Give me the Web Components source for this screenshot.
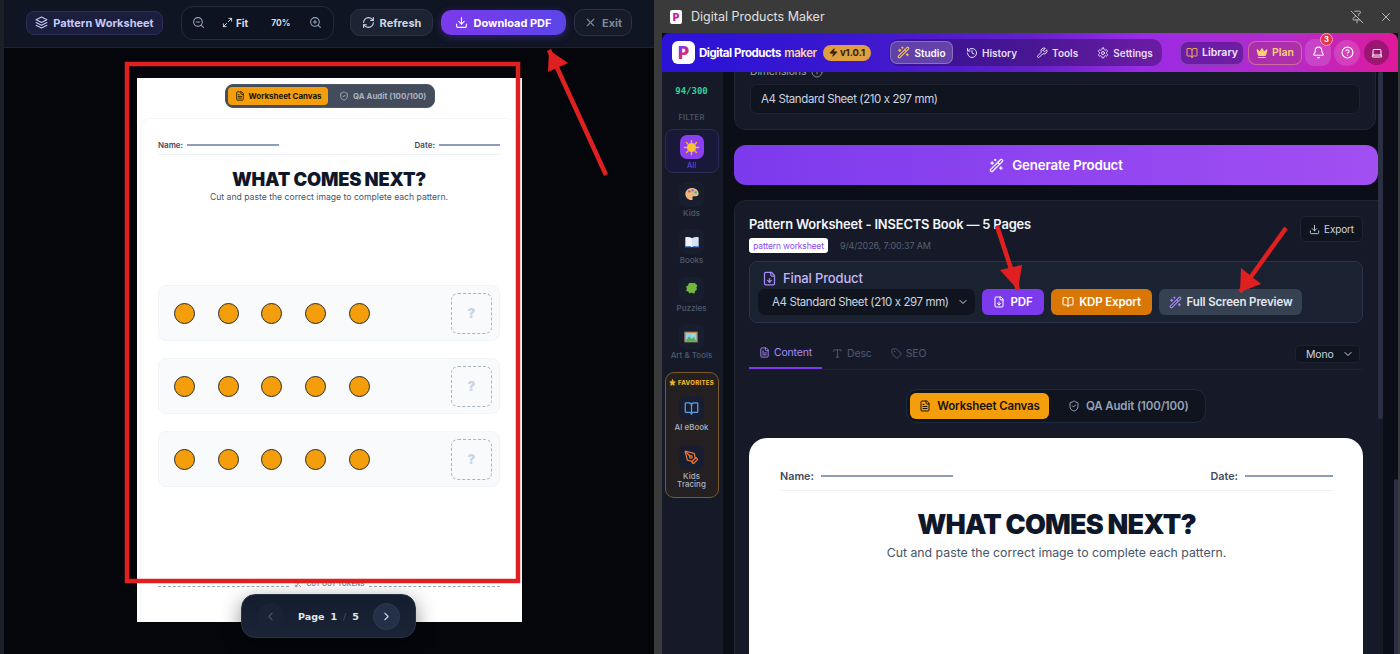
<!DOCTYPE html>
<html lang="en">
<head>
<meta charset="utf-8">
<title>Digital Products Maker</title>
<style>
  html, body { margin: 0; height: 654px; overflow: hidden; background: #3a3a3a; }
  body { display: flex; width: 1400px; font-family: Inter, "Liberation Sans", sans-serif; }
</style>
</head>
<body>
<preview-pane></preview-pane>
<app-window></app-window>
<annotation-layer></annotation-layer>

<script>
const ICONS = {
  layers: '<path d="M12 2 2 7l10 5 10-5-10-5z"/><path d="m2 17 10 5 10-5"/><path d="m2 12 10 5 10-5"/>',
  zoomOut: '<circle cx="11" cy="11" r="8"/><path d="m21 21-4.35-4.35"/><path d="M8 11h6"/>',
  zoomIn: '<circle cx="11" cy="11" r="8"/><path d="m21 21-4.35-4.35"/><path d="M8 11h6M11 8v6"/>',
  expand: '<path d="M15 3h6v6"/><path d="M9 21H3v-6"/><path d="M21 3l-7 7"/><path d="m3 21 7-7"/>',
  refresh: '<path d="M3 12a9 9 0 0 1 9-9 9.75 9.75 0 0 1 6.74 2.74L21 8"/><path d="M21 3v5h-5"/><path d="M21 12a9 9 0 0 1-9 9 9.75 9.75 0 0 1-6.74-2.74L3 16"/><path d="M8 16H3v5"/>',
  download: '<path d="M21 15v4a2 2 0 0 1-2 2H5a2 2 0 0 1-2-2v-4"/><path d="m7 10 5 5 5-5"/><path d="M12 15V3"/>',
  x: '<path d="M18 6 6 18"/><path d="m6 6 12 12"/>',
  file: '<path d="M15 2H6a2 2 0 0 0-2 2v16a2 2 0 0 0 2 2h12a2 2 0 0 0 2-2V7z"/><path d="M14 2v4a2 2 0 0 0 2 2h4"/><path d="M10 9H8"/><path d="M16 13H8"/><path d="M16 17H8"/>',
  fileDown: '<path d="M15 2H6a2 2 0 0 0-2 2v16a2 2 0 0 0 2 2h12a2 2 0 0 0 2-2V7z"/><path d="M14 2v4a2 2 0 0 0 2 2h4"/><path d="M12 18v-6"/><path d="m9 15 3 3 3-3"/>',
  shield: '<path d="M20 13c0 5-3.5 7.5-7.66 8.95a1 1 0 0 1-.67-.01C7.5 20.5 4 18 4 13V6a1 1 0 0 1 1-1c2 0 4.5-1.2 6.24-2.72a1.17 1.17 0 0 1 1.52 0C14.51 3.81 17 5 19 5a1 1 0 0 1 1 1z"/><path d="m9 12 2 2 4-4"/>',
  book: '<path d="M12 7v14"/><path d="M3 18a1 1 0 0 1-1-1V4a1 1 0 0 1 1-1h5a4 4 0 0 1 4 4 4 4 0 0 1 4-4h5a1 1 0 0 1 1 1v13a1 1 0 0 1-1 1h-6a3 3 0 0 0-3 3 3 3 0 0 0-3-3z"/>',
  wand: '<path d="m21.64 3.64-1.28-1.28a1.21 1.21 0 0 0-1.72 0L2.36 18.64a1.21 1.21 0 0 0 0 1.72l1.28 1.28a1.2 1.2 0 0 0 1.72 0L21.64 5.36a1.2 1.2 0 0 0 0-1.72"/><path d="m14 7 3 3"/><path d="M5 6v4"/><path d="M19 14v4"/><path d="M10 2v2"/><path d="M7 8H3"/><path d="M21 16h-4"/><path d="M11 3H9"/>',
  history: '<path d="M3 12a9 9 0 1 0 9-9 9.75 9.75 0 0 0-6.74 2.74L3 8"/><path d="M3 3v5h5"/><path d="M12 7v5l4 2"/>',
  wrench: '<path d="M14.7 6.3a1 1 0 0 0 0 1.4l1.6 1.6a1 1 0 0 0 1.4 0l3.77-3.77a6 6 0 0 1-7.94 7.94l-6.91 6.91a2.12 2.12 0 0 1-3-3l6.91-6.91a6 6 0 0 1 7.94-7.94l-3.76 3.76z"/>',
  settings: '<path d="M12.22 2h-.44a2 2 0 0 0-2 2v.18a2 2 0 0 1-1 1.73l-.43.25a2 2 0 0 1-2 0l-.15-.08a2 2 0 0 0-2.73.73l-.22.38a2 2 0 0 0 .73 2.73l.15.1a2 2 0 0 1 1 1.72v.51a2 2 0 0 1-1 1.74l-.15.09a2 2 0 0 0-.73 2.73l.22.38a2 2 0 0 0 2.73.73l.15-.08a2 2 0 0 1 2 0l.43.25a2 2 0 0 1 1 1.73V20a2 2 0 0 0 2 2h.44a2 2 0 0 0 2-2v-.18a2 2 0 0 1 1-1.73l.43-.25a2 2 0 0 1 2 0l.15.08a2 2 0 0 0 2.73-.73l.22-.39a2 2 0 0 0-.73-2.73l-.15-.08a2 2 0 0 1-1-1.74v-.5a2 2 0 0 1 1-1.74l.15-.09a2 2 0 0 0 .73-2.73l-.22-.38a2 2 0 0 0-2.73-.73l-.15.08a2 2 0 0 1-2 0l-.43-.25a2 2 0 0 1-1-1.73V4a2 2 0 0 0-2-2z"/><circle cx="12" cy="12" r="3"/>',
  crown: '<path d="M11.562 3.266a.5.5 0 0 1 .876 0L15.39 8.87a1 1 0 0 0 1.516.294L21.183 5.5a.5.5 0 0 1 .798.519l-2.834 10.246a1 1 0 0 1-.956.734H5.81a1 1 0 0 1-.957-.734L2.02 6.02a.5.5 0 0 1 .798-.519l4.276 3.664a1 1 0 0 0 1.516-.294z"/><path d="M5 21h14"/>',
  bell: '<path d="M10.268 21a2 2 0 0 0 3.464 0"/><path d="M3.262 15.326A1 1 0 0 0 4 17h16a1 1 0 0 0 .74-1.673C19.41 13.956 18 12.499 18 8A6 6 0 0 0 6 8c0 4.499-1.411 5.956-2.738 7.326"/>',
  help: '<circle cx="12" cy="12" r="10"/><path d="M9.09 9a3 3 0 0 1 5.83 1c0 2-3 3-3 3"/><path d="M12 17h.01"/>',
  info: '<circle cx="12" cy="12" r="10"/><path d="M12 16v-4"/><path d="M12 8h.01"/>',
  laptop: '<path d="M20 16V7a2 2 0 0 0-2-2H6a2 2 0 0 0-2 2v9m16 0H4m16 0 1.28 2.55a1 1 0 0 1-.9 1.45H3.62a1 1 0 0 1-.9-1.45L4 16"/>',
  type: '<path d="M4 7V4h16v3"/><path d="M9 20h6"/><path d="M12 4v16"/>',
  tag: '<path d="M12.586 2.586A2 2 0 0 0 11.172 2H4a2 2 0 0 0-2 2v7.172a2 2 0 0 0 .586 1.414l8.704 8.704a2.426 2.426 0 0 0 3.42 0l6.58-6.58a2.426 2.426 0 0 0 0-3.42z"/><circle cx="7.5" cy="7.5" r=".5"/>',
  left: '<path d="m15 18-6-6 6-6"/>',
  right: '<path d="m9 18 6-6-6-6"/>',
  down: '<path d="m6 9 6 6 6-6"/>',
  pinOff: '<path d="M12 17v5"/><path d="M15 9.34V7a1 1 0 0 1 1-1 2 2 0 0 0 0-4H7.89"/><path d="m2 2 20 20"/><path d="M9 9v1.76a2 2 0 0 1-1.11 1.79l-1.78.9A2 2 0 0 0 5 15.24V16a1 1 0 0 0 1 1h11"/>',
  pen: '<path d="M15.707 21.293a1 1 0 0 1-1.414 0l-1.586-1.586a1 1 0 0 1 0-1.414l5.586-5.586a1 1 0 0 1 1.414 0l1.586 1.586a1 1 0 0 1 0 1.414z"/><path d="m18 13-1.375-6.874a1 1 0 0 0-.746-.776L3.235 2.028a1 1 0 0 0-1.207 1.207L5.35 15.879a1 1 0 0 0 .776.746L13 18"/><path d="m2.3 2.3 7.286 7.286"/><circle cx="11" cy="11" r="2"/>',
  scissors: '<circle cx="6" cy="6" r="3"/><circle cx="6" cy="18" r="3"/><path d="M8.12 8.12 12 12"/><path d="M20 4 8.12 15.88"/><path d="M14.8 14.8 20 20"/>',
  zap: '<path fill="currentColor" d="M4 14a1 1 0 0 1-.78-1.63l9.9-10.2a.5.5 0 0 1 .86.46l-1.92 6.02A1 1 0 0 0 13 10h7a1 1 0 0 1 .78 1.63l-9.9 10.2a.5.5 0 0 1-.86-.46l1.92-6.02A1 1 0 0 0 11 14z"/>',
  star: '<path d="M12 2l3 6.5 7 1-5 5 1.2 7.500L12 18.500 5.800 22 7 14.500l-5-5 7-1z"/>'
}

// the colour emoji of the rail, drawn by hand since no emoji font is installed
const EMOJI = {
  sun: '<g stroke="#f5b820" stroke-width="2" stroke-linecap="round"><path d="M12 2v3M12 19v3M2 12h3M19 12h3M5 5l2 2M17 17l2 2M19 5l-2 2M7 17l-2 2"/></g><circle cx="12" cy="12" r="6.500" fill="#f7c32e"/>',
  palette: '<path d="M12 3C6 3 2 7 2 12s4 9 9 9c2 0 2.500-1.500 1.800-2.800-.7-1.400.2-2.700 1.700-2.700H18c2.500 0 4-1.500 4-3.800C22 6.500 17.500 3 12 3z" fill="#e8b48c"/><circle cx="8" cy="8" r="1.800" fill="#e5484d"/><circle cx="13" cy="6.500" r="1.800" fill="#4c8ff0"/><circle cx="17.500" cy="9.500" r="1.800" fill="#45b86a"/><circle cx="6" cy="13" r="1.800" fill="#f2c230"/>',
  bookOpen: '<path d="M2 5c4-1 7-.5 10 1.500V20c-3-2-6-2.500-10-1.500z" fill="#eef3fb"/><path d="M22 5c-4-1-7-.5-10 1.500V20c3-2 6-2.500 10-1.500z" fill="#d5e1f2"/><path d="M1.500 18.500c4-1 7.500-.5 10.500 1.500 3-2 6.500-2.500 10.500-1.500v1.500H1.500z" fill="#4f8fe0"/>',
  puzzle: '<path d="M9 3h3c0-2 4-2 4 0h3v5c2 0 2 4 0 4v5h-5c0 2-4 2-4 0H6v-4c-2.500 0-2.500-4 0-4V5z" fill="#72b83e" transform="rotate(20 12 12)"/>',
  picture: '<rect x="2" y="4" width="20" height="16" fill="#b08a58"/><rect x="4" y="6" width="16" height="12" fill="#8fd0ee"/><path d="M4 18l5-7 4 4 3-3 4 6z" fill="#57ad5f"/><circle cx="15.500" cy="9" r="1.500" fill="#f7d64a"/>'
}

class LuIcon extends HTMLElement {
  connectedCallback() {
    const size = this.getAttribute('size') || 14
    const sw = this.getAttribute('sw') || 2
    const filled = this.hasAttribute('filled') ? 'currentColor' : 'none'
    this.attachShadow({ mode: 'open' }).innerHTML = `
      <style>:host { display: inline-flex; flex: none; } svg { display: block; }</style>
      <svg width="${size}" height="${size}" viewBox="0 0 24 24" fill="${filled}" stroke="currentColor"
        stroke-width="${sw}" stroke-linecap="round" stroke-linejoin="round">${ICONS[this.getAttribute('name')]}</svg>`
  }
}

class ColorEmoji extends HTMLElement {
  connectedCallback() {
    const size = this.getAttribute('size') || 14
    this.attachShadow({ mode: 'open' }).innerHTML = `
      <style>:host { display: inline-flex; flex: none; } svg { display: block; }</style>
      <svg width="${size}" height="${size}" viewBox="0 0 24 24">${EMOJI[this.getAttribute('name')]}</svg>`
  }
}

// one row of the worksheet: five tokens and the answer box
class PatternRow extends HTMLElement {
  constructor() {
    super()
    const dots = Array.from({ length: 5 }, () => '<i></i>').join('')
    this.attachShadow({ mode: 'open' }).innerHTML = `
      <style>
        :host { display: flex; align-items: center; justify-content: space-between; height: 56px; padding: 0 7px 0 15px;
          box-sizing: border-box; background: #f8fafc; border: 1px solid #f1f5f9; border-radius: 8px; }
        .dots { display: flex; gap: 22.7px; }
        i { width: 19px; height: 19px; border-radius: 50%; background: #f59e0b; border: 1.5px solid #2a2a2a; box-sizing: content-box; }
        b { display: flex; align-items: center; justify-content: center; width: 41px; height: 41px; box-sizing: border-box; border: 1.2px dashed #a8b2c2;
          border-radius: 7px; color: #cbd5e1; font: 900 13px Inter, sans-serif; }
      </style>
      <div class="dots">${dots}</div>
      <b>?</b>`
  }
}

// the paper header: name, date, title. Sizes come from custom properties, the two previews differ
class SheetHead extends HTMLElement {
  constructor() {
    super()
    this.attachShadow({ mode: 'open' }).innerHTML = `
      <style>
        :host { display: block; color: #0f172a; }
        .meta { display: flex; align-items: center; border-bottom: 1px solid #eef1f5; height: var(--meta-h); padding-bottom: var(--meta-pad);
          font-size: var(--meta-fs); font-weight: 600; color: #3f4b5c; }
        .meta u { display: block; height: 1.5px; background: #8d9cb8; text-decoration: none; margin-left: var(--meta-gap); }
        .name { width: var(--name-w); }
        .date { width: var(--date-w); }
        .sp { flex: 1; }
        h1 { margin: var(--h1-top) 0 0; text-align: center; font: 900 var(--h1-fs)/1.15 Inter, sans-serif; letter-spacing: var(--h1-ls); color: #0f172a; }
        p { margin: var(--p-top) 0 0; text-align: center; font-size: var(--p-fs); color: #475569; }
      </style>
      <div class="meta"><span>Name:</span><u class="name"></u><span class="sp"></span><span>Date:</span><u class="date"></u></div>
      <h1>WHAT COMES NEXT?</h1>
      <p>Cut and paste the correct image to complete each pattern.</p>`
  }
}

class SegSwitch extends HTMLElement {
  constructor() {
    super()
    this.attachShadow({ mode: 'open' }).innerHTML = `
      <style>
        :host { display: inline-flex; align-items: center; box-sizing: border-box; height: var(--h); width: var(--w); padding: 0 var(--pad); border-radius: var(--r);
          background: var(--bg); border: 1px solid var(--bd); font-size: var(--fs); font-weight: var(--fw, 600); white-space: nowrap; }
        span { display: flex; align-items: center; gap: var(--gap); height: var(--in-h); border-radius: var(--in-r); }
        .on { width: var(--on-w); justify-content: center; background: #f59e0b; color: #1a1205; flex: none; }
        .off { padding-left: var(--off-pad); color: var(--off); }
      </style>
      <span class="on"><lu-icon name="file" size="${this.getAttribute('ico')}"></lu-icon>Worksheet Canvas</span>
      <span class="off"><lu-icon name="shield" size="${this.getAttribute('ico')}"></lu-icon>QA Audit (100/100)</span>`
  }
}

class TopButton extends HTMLElement {
  constructor() {
    super()
    this.attachShadow({ mode: 'open' }).innerHTML = `
      <style>
        :host { display: inline-flex; align-items: center; justify-content: center; gap: 5px; box-sizing: border-box;
          height: 27px; border-radius: 10px; border: 1px solid #2a3344; background: #1c2433; color: #cbd5e1;
          font-size: 11px; font-weight: 700; }
        :host([primary]) { height: 25px; border: 0; color: #fff; background: linear-gradient(90deg, #7c3aed, #5b45e8);
          box-shadow: 0 2px 8px rgba(99,60,230,.4); }
        :host([ghost]) { color: #7d8797; background: #151b28; }
      </style>
      <slot></slot>`
  }
}

class PreviewPane extends HTMLElement {
  constructor() {
    super()
    this.attachShadow({ mode: 'open' }).innerHTML = `
      <style>
        :host { display: flex; flex-direction: column; width: 654px; flex: none; height: 654px; position: relative;
          background: #04060b; border-left: 4px solid #1b1f27; box-sizing: border-box; font-family: Inter, sans-serif; overflow: hidden; }
        .bar { display: flex; align-items: center; height: 48px; flex: none; background: #0f1522; border-bottom: 1px solid #1b2230;
          padding-left: 22px; box-sizing: border-box; padding-bottom: 2px; }
        .chip { display: flex; align-items: center; gap: 5px; width: 137px; height: 24px; justify-content: center; box-sizing: border-box;
          background: #1b1f3d; border: 1px solid #2b2f55; border-radius: 8px; color: #c7c8f5; font-size: 11px; font-weight: 700; }
        .zoom { display: flex; align-items: center; width: 153px; height: 34px; margin: 0 16px 0 18px; box-sizing: border-box;
          border: 1px solid #232c3c; border-radius: 12px; background: #0d1320; color: #94a3b8; font-size: 10px; font-weight: 700; }
        .zoom .a { margin-left: 10px; }
        .zoom .fit { display: flex; align-items: center; gap: 3px; margin-left: 17px; color: #d7deea; }
        .zoom .pct { margin-left: 23px; color: #d7deea; width: 19px; font-size: 8.5px; }
        .zoom .b { margin-left: 19px; }
        top-button + top-button { margin-left: 8px; }
        .stage { flex: 1; display: flex; min-height: 0; }
        .paper { width: 385px; height: 544px; margin: 30px 0 0 133px; background: #fff; display: flex; flex-direction: column; align-items: center; flex: none; }
        seg-switch { margin-top: 6px; --h: 24px; --w: 210px; --pad: 2.5px; --r: 8px; --bg: #444c5c; --bd: #4f5869; --fs: 7.9px; --fw: 700; --gap: 4px;
          --in-h: 18px; --in-r: 4px; --on-w: 100px; --off-pad: 11px; --off: #a9b2c0; }
        .inner { align-self: stretch; display: flex; flex-direction: column; margin: 10px 6px 0 3px; padding: 0 16px 0 17px; flex: 1; border: 1px solid #f3f5f8; border-bottom: 0; border-right: 0; border-radius: 10px 10px 0 0; }
        sheet-head { margin-top: 22px; --meta-h: 8px; --meta-pad: 5px; --meta-fs: 8px; --meta-gap: 4px; --name-w: 92px; --date-w: 61px;
          --h1-top: 14px; --h1-fs: 18.3px; --h1-ls: -.2px; --p-top: 2px; --p-fs: 8.65px; }
        .rows { display: flex; flex-direction: column; gap: 17px; margin: 83px 0 0; }
        .cut { display: flex; align-items: center; gap: 5px; margin-top: 93px; color: #7b8494; font-size: 6.5px; font-weight: 600; height: 8px; }
        .cut u { flex: 1; border-top: 1px dashed #9aa3af; text-decoration: none; position: relative; top: 2px; }
        .pager { position: absolute; left: 237px; top: 594px; width: 175px; height: 44px; box-sizing: border-box; border-radius: 14px;
          display: flex; align-items: center; background: linear-gradient(#141d2e, #1a2436); border: 1px solid #2a3345;
          box-shadow: 0 6px 20px rgba(0,0,0,.45); color: #e2e8f0; font: 700 9.5px "DejaVu Sans", sans-serif; padding: 0 15px; }
        .pager i { display: flex; align-items: center; justify-content: center; width: 27px; height: 27px; border-radius: 50%; }
        .prev { color: #475569; background: #1a2335; }
        .next { color: #cbd5e1; background: #243047; border: 1px solid #2f3b52; box-sizing: border-box; }
        .label { flex: 1; display: flex; justify-content: center; gap: 6px; }
        .label em { font-style: normal; color: #475569; font-weight: 400; }
      </style>
      <div class="bar">
        <div class="chip"><lu-icon name="layers" size="13"></lu-icon>Pattern Worksheet</div>
        <div class="zoom">
          <lu-icon class="a" name="zoomOut" size="13"></lu-icon>
          <span class="fit"><lu-icon name="expand" size="11"></lu-icon>Fit</span>
          <span class="pct">70%</span>
          <lu-icon class="b" name="zoomIn" size="13"></lu-icon>
        </div>
        <top-button style="width:83px"><lu-icon name="refresh" size="13"></lu-icon>Refresh</top-button>
        <top-button primary style="width:125px"><lu-icon name="download" size="13"></lu-icon>Download PDF</top-button>
        <top-button ghost style="width:58px"><lu-icon name="x" size="13"></lu-icon>Exit</top-button>
      </div>
      <div class="stage">
        <div class="paper">
          <seg-switch ico="10"></seg-switch>
          <div class="inner">
            <sheet-head></sheet-head>
            <div class="rows"><pattern-row></pattern-row><pattern-row></pattern-row><pattern-row></pattern-row></div>
            <div class="cut"><u></u><lu-icon name="scissors" size="8"></lu-icon>CUT OUT TOKENS<u></u></div>
          </div>
        </div>
      </div>
      <div class="pager">
        <i class="prev"><lu-icon name="left" size="13"></lu-icon></i>
        <span class="label"><span>Page</span><span>1</span><em>/</em><span>5</span></span>
        <i class="next"><lu-icon name="right" size="13"></lu-icon></i>
      </div>`
  }
}

class AppHeader extends HTMLElement {
  constructor() {
    super()
    this.attachShadow({ mode: 'open' }).innerHTML = `
      <style>
        :host { display: flex; align-items: center; height: 39px; flex: none; padding-left: 10px; box-sizing: border-box; position: relative; z-index: 2;
          background: linear-gradient(90deg, #2a12d8 0%, #3a17cf 25%, #6320c9 50%, #9a2be6 65%, #b52bc9 85%, #e0189a 100%);
          border-radius: 8px 8px 0 0; color: #fff; font-size: 10.5px; font-weight: 600; white-space: nowrap; }
        .logo { width: 23px; height: 23px; border-radius: 6px; background: #fff; display: flex; align-items: center; justify-content: center; flex: none; font-weight: 900; font-size: 17px; }
        .logo b { font-weight: 900; background: linear-gradient(135deg, #7c3aed 20%, #e5246f 60%, #f5762a); -webkit-background-clip: text; background-clip: text; color: transparent; }
        .brand { margin-left: 4px; width: 118px; font-weight: 700; font-size: 11.5px; letter-spacing: -.45px; }
        .brand span { color: #f7d9a0; font-weight: 600; margin-left: 1px; }
        .ver { display: flex; align-items: center; gap: 2px; margin-left: 6px; height: 16px; width: 48px; justify-content: center; border-radius: 8px;
          background: #dd9f3f; color: #33210a; font-size: 9.5px; font-weight: 700; }
        .nav { display: flex; align-items: center; margin-left: 18px; width: 273px; height: 27px; border-radius: 10px; background: rgba(40,10,80,.45); padding-left: 1px; box-sizing: border-box; }
        .nav div { display: flex; align-items: center; gap: 4px; color: #e6defa; font-size: 10px; }
        .nav .on { height: 23px; width: 63px; justify-content: center; border-radius: 7px; background: rgba(255,255,255,.2); border: 1px solid rgba(255,255,255,.25); box-sizing: border-box; color: #fff; }
        .nav .on lu-icon { color: #f6c453; }
        .nav div + div { margin-left: 19px; }
        .nav .on + div { margin-left: 13px; }
        .btn { display: flex; align-items: center; justify-content: center; gap: 4px; height: 24px; border-radius: 8px; box-sizing: border-box; font-size: 10.5px; }
        .lib { margin-left: 18px; width: 64px; background: rgba(70,20,130,.6); border: 1px solid rgba(255,255,255,.16); color: #f3e6ff; }
        .lib lu-icon { color: #f2b04c; }
        .plan { margin-left: 4px; width: 54px; background: rgba(170,50,160,.75); border: 1px solid rgba(255,200,120,.4); color: #fcd277; }
        .round { margin-left: 3px; width: 26px; height: 27px; border-radius: 9px; background: rgba(255,255,255,.14); display: flex; align-items: center; justify-content: center; position: relative; }
        .round.help { border-radius: 50%; height: 26px; }
        .round.user { width: 25px; height: 25px; border-radius: 50%; background: #9a1670; margin-left: 4px; }
        .badge { position: absolute; left: 15px; top: -6px; width: 13px; height: 13px; border-radius: 50%; background: #e5344b; border: 1px solid #f8a5b0; box-sizing: border-box;
          display: flex; align-items: center; justify-content: center; font-size: 7.5px; font-weight: 700; color: #fff; }
      </style>
      <div class="logo"><b>P</b></div>
      <div class="brand">Digital Products <span>maker</span></div>
      <div class="ver"><lu-icon name="zap" size="9"></lu-icon>v1.0.1</div>
      <div class="nav">
        <div class="on"><lu-icon name="wand" size="13"></lu-icon>Studio</div>
        <div><lu-icon name="history" size="12"></lu-icon>History</div>
        <div><lu-icon name="wrench" size="12"></lu-icon>Tools</div>
        <div><lu-icon name="settings" size="12"></lu-icon>Settings</div>
      </div>
      <div class="btn lib"><lu-icon name="book" size="12"></lu-icon>Library</div>
      <div class="btn plan"><lu-icon name="crown" size="12" filled></lu-icon>Plan</div>
      <div class="round"><lu-icon name="bell" size="13"></lu-icon><span class="badge">3</span></div>
      <div class="round help"><lu-icon name="help" size="13"></lu-icon></div>
      <div class="round user"><lu-icon name="laptop" size="12"></lu-icon></div>`
  }
}

class RailItem extends HTMLElement {
  constructor() {
    super()
    this.attachShadow({ mode: 'open' }).innerHTML = `
      <style>
        :host { display: flex; flex-direction: column; align-items: center; color: #4f5a6e; font-size: 8px; font-weight: 500; text-align: center; line-height: 8px; }
        .ic { width: 25px; height: 25px; border-radius: 7px; background: #191e2e; display: flex; align-items: center; justify-content: center; margin-bottom: 2px; }
        :host([active]) { color: #5b45c8; padding: 5px 0 3px; border: 1px solid #2b2a55; border-radius: 8px; background: #181838; height: 44px; box-sizing: border-box; width: 54px; align-self: center; margin-bottom: -4px; }
        :host([active]) .ic { background: #8b3ff0; width: 24px; height: 24px; }
        :host([fav]) { color: #aab2c0; }
        :host([fav]) .ic { background: #191d30; }
      </style>
      <div class="ic"><slot name="icon"></slot></div>
      <slot></slot>`
  }
}

class SideRail extends HTMLElement {
  constructor() {
    super()
    this.attachShadow({ mode: 'open' }).innerHTML = `
      <style>
        :host { display: flex; flex-direction: column; align-items: center; width: 61px; flex: none; background: #161a28; box-sizing: border-box; padding: 0 5px 0 3px; }
        .count { margin-top: 14px; font: 600 9px "DejaVu Sans Mono", monospace; color: #34d399; }
        .filter { margin-top: 17px; font-size: 7.5px; font-weight: 600; color: #4b5565; letter-spacing: .3px; }
        .list { display: flex; flex-direction: column; gap: 12.6px; margin-top: 7px; align-items: center; width: 100%; }
        .fav { display: flex; flex-direction: column; gap: 14px; width: 54px; height: 126px; box-sizing: border-box; margin-top: 13px; border: 1px solid #7a5a25; border-radius: 9px;
          background: #241f20; padding-top: 5px; align-items: center; flex: none; }
        .fav .head { display: flex; align-items: center; gap: 2px; font-size: 6px; font-weight: 800; color: #f0b429; letter-spacing: .3px; margin-bottom: -5px; height: 9px; }
        .blue { color: #5aa0e6; }
        .org { color: #e8793a; }
      </style>
      <div class="count">94/300</div>
      <div class="filter">FILTER</div>
      <div class="list">
        <rail-item active><color-emoji slot="icon" name="sun" size="17"></color-emoji>All</rail-item>
        <rail-item><color-emoji slot="icon" name="palette" size="16"></color-emoji>Kids</rail-item>
        <rail-item><color-emoji slot="icon" name="bookOpen" size="16"></color-emoji>Books</rail-item>
        <rail-item><color-emoji slot="icon" name="puzzle" size="16"></color-emoji>Puzzles</rail-item>
        <rail-item><color-emoji slot="icon" name="picture" size="16"></color-emoji>Art &amp; Tools</rail-item>
      </div>
      <div class="fav">
        <div class="head"><lu-icon name="star" size="7" filled></lu-icon>FAVORITES</div>
        <rail-item fav><lu-icon slot="icon" class="blue" name="book" size="15"></lu-icon>AI eBook</rail-item>
        <rail-item fav><lu-icon slot="icon" class="org" name="pen" size="15"></lu-icon>Kids<br>Tracing</rail-item>
      </div>`
  }
}

class ProductPanel extends HTMLElement {
  constructor() {
    super()
    this.attachShadow({ mode: 'open' }).innerHTML = `
      <style>
        :host { display: flex; flex-direction: column; flex: 1; min-width: 0; position: relative; background: #0b0e16; padding: 0 15px 0 11px; box-sizing: border-box; overflow: hidden; color: #e2e8f0; font-family: Inter, sans-serif; letter-spacing: -.15px; white-space: nowrap; }
        .card { background: #161a28; border: 1px solid #1f2535; border-radius: 12px; box-sizing: border-box; }
        .dims { flex: none; height: 58px; margin-right: 7px; border-top: 0; border-radius: 0 0 12px 12px; padding: 12px 15px 0 15px; }
        .lbl { display: flex; align-items: center; gap: 5px; height: 13px; margin: -19px 0 6px; font-size: 10.5px; color: #94a3b8; }
        .sel { display: flex; align-items: center; height: 30px; box-sizing: border-box; padding-left: 10px; background: #10141f; border: 1px solid #1d2333; border-radius: 7px; font-size: 11.5px; letter-spacing: -.4px; color: #cbd5e1; }
        .gen { flex: none; display: flex; align-items: center; justify-content: center; gap: 8px; height: 40px; margin: 15px 5px 0 0; border-radius: 12px; background: linear-gradient(90deg, #7c3aed, #a24ff2); font-size: 13.3px; font-weight: 600; color: #fff; }
        .main { flex: 1; margin-top: 15px; border-bottom: 0; border-right: 0; border-radius: 12px 0 0 0; padding: 0 20px 0 14px; min-height: 0; display: flex; flex-direction: column; }
        .titlerow { display: flex; justify-content: space-between; height: 60px; flex: none; }
        h2 { margin: 15px 0 0; font-size: 12.9px; line-height: 18px; font-weight: 600; color: #f1f5f9; }
        .meta { display: flex; align-items: center; gap: 12px; margin-top: 4px; font-size: 9px; color: #566074; }
        .tag { display: flex; align-items: center; justify-content: center; height: 15px; width: 79px; border-radius: 3px; background: #fff; color: #8b4cf0; font-size: 8.5px; }
        .export { display: flex; align-items: center; justify-content: center; gap: 4px; margin-top: 15px; width: 63px; height: 26px; box-sizing: border-box; border: 1px solid #1f2535; border-radius: 6px; background: #10141f; font-size: 10px; color: #cbd5e1; }
        .final { flex: none; height: 62px; box-sizing: border-box; background: #1a2231; border: 1px solid #2a3446; border-radius: 8px; padding: 7px 0 0 8px; }
        .final .t { display: flex; align-items: center; gap: 6px; font-size: 13px; font-weight: 500; color: #c5b6f7; line-height: 18px; padding-left: 4px; }
        .final .t lu-icon { color: #a78bfa; }
        .acts { display: flex; align-items: center; gap: 7px; margin-top: 2px; }
        .acts .fsel { display: flex; align-items: center; justify-content: space-between; width: 217px; height: 26px; padding: 0 6px 0 14px; box-sizing: border-box; border-radius: 7px; background: #10141f; font-size: 11.5px; letter-spacing: -.4px; color: #cbd5e1; }
        .acts .b { display: flex; align-items: center; justify-content: center; gap: 5px; height: 26px; border-radius: 6px; font-size: 11.5px; font-weight: 600; color: #fff; box-sizing: border-box; }
        .pdf { width: 62px; background: #7c3aed; }
        .kdp { width: 101px; background: #d97706; }
        .full { width: 143px; background: #364152; color: #e2e8f0 !important; }
        .full lu-icon { color: #a78bfa; }
        .tabs { display: flex; flex: none; align-items: flex-start; height: 45px; margin-top: 1px; border-bottom: 1px solid #1c2231; }
        .tabs div { display: flex; align-items: center; gap: 4px; font-size: 10.5px; height: 45px; padding-top: 14px; box-sizing: border-box; color: #4f5a6e; margin-left: 10px; }
        .tabs div + div + div { margin-left: 19px; }
        .tabs .on { color: #a78bfa; margin-left: 0; width: 73px; justify-content: center; border-bottom: 2px solid #7c3aed; }
        .tabs .mono { margin: 21px 3px 0 auto; padding: 0 5px 0 10px; width: 65px; height: 18px; justify-content: space-between; border-radius: 4px; background: #10141f; border: 1px solid #1c2231; color: #cbd5e1; }
        .segrow { flex: none; display: flex; justify-content: center; margin-top: 19px; }
        seg-switch { --h: 34px; --w: 300px; --pad: 3px; --r: 11px; --bg: #10141f; --bd: #1e2a40; --fs: 11.5px; --gap: 6px; --in-h: 26px; --in-r: 6px; --on-w: 139px; --off-pad: 19px; --off: #94a3b8; }
        .sheet { flex: 1; margin-top: 15px; background: #fff; border-radius: 18px 18px 0 0; padding: 31px 30px 0 31px; letter-spacing: 0; }
        sheet-head { --meta-h: 14px; --meta-pad: 7px; --meta-fs: 10.8px; --meta-gap: 7px; --name-w: 132px; --date-w: 88px;
          --h1-top: 18px; --h1-fs: 27px; --h1-ls: -.8px; --p-top: 5px; --p-fs: 12.3px; }
        .thumb { position: absolute; background: #2a2f44; border-radius: 2px; }
        .thumb.inner { left: 655px; top: 0; width: 5px; height: 347px; }
        .thumb.outer { right: 0; top: 407px; width: 4px; height: 214px; }
      </style>
      <div class="card dims"><div class="lbl">Dimensions <lu-icon name="info" size="12" sw="1.6"></lu-icon></div><div class="sel">A4 Standard Sheet (210 x 297 mm)</div></div>
      <div class="gen"><lu-icon name="wand" size="15"></lu-icon>Generate Product</div>
      <div class="card main">
        <div class="titlerow">
          <div>
            <h2>Pattern Worksheet - INSECTS Book — 5 Pages</h2>
            <div class="meta"><span class="tag">pattern worksheet</span>9/4/2026, 7:00:37 AM</div>
          </div>
          <div class="export"><lu-icon name="download" size="11"></lu-icon>Export</div>
        </div>
        <div class="final">
          <div class="t"><lu-icon name="fileDown" size="15"></lu-icon>Final Product</div>
          <div class="acts">
            <div class="fsel">A4 Standard Sheet (210 x 297 mm)<lu-icon name="down" size="12"></lu-icon></div>
            <div class="b pdf"><lu-icon name="fileDown" size="12"></lu-icon>PDF</div>
            <div class="b kdp"><lu-icon name="book" size="12"></lu-icon>KDP Export</div>
            <div class="b full"><lu-icon name="wand" size="13"></lu-icon>Full Screen Preview</div>
          </div>
        </div>
        <div class="tabs">
          <div class="on"><lu-icon name="file" size="11"></lu-icon>Content</div>
          <div><lu-icon name="type" size="11"></lu-icon>Desc</div>
          <div><lu-icon name="tag" size="11"></lu-icon>SEO</div>
          <div class="mono">Mono<lu-icon name="down" size="12"></lu-icon></div>
        </div>
        <div class="segrow"><seg-switch ico="12"></seg-switch></div>
        <div class="sheet"><sheet-head></sheet-head></div>
      </div>
      <div class="thumb inner"></div>
      <div class="thumb outer"></div>`
  }
}

class AppWindow extends HTMLElement {
  constructor() {
    super()
    this.attachShadow({ mode: 'open' }).innerHTML = `
      <style>
        :host { display: flex; flex-direction: column; flex: 1; height: 654px; background: #3a3a3a; font-family: Inter, sans-serif; min-width: 0; }
        .title { display: flex; align-items: center; height: 33px; flex: none; padding: 0 7px 0 16px; color: #e0e0e0; font-size: 12.5px; }
        .fav { width: 12px; height: 14px; border-radius: 2px; background: #fff; margin-right: 9px; font-size: 10px; font-weight: 900; text-align: center; line-height: 14px; color: #c0249f; }
        .title span { flex: 1; }
        .title lu-icon { color: #bdbdbd; margin-left: 15px; }
        .app { display: flex; flex-direction: column; flex: 1; margin: 0 2px 0 8px; min-height: 0; background: #0b0e16; }
        .body { display: flex; flex: 1; min-height: 0; }
      </style>
      <div class="title"><div class="fav">P</div><span>Digital Products Maker</span>
        <lu-icon name="pinOff" size="14" sw="1.6"></lu-icon><lu-icon name="x" size="14" sw="1.6"></lu-icon></div>
      <div class="app">
        <app-header></app-header>
        <div class="body"><side-rail></side-rail><product-panel></product-panel></div>
      </div>`
  }
}

// the red marks drawn over the screenshot
class AnnotationLayer extends HTMLElement {
  constructor() {
    super()
    const arrow = (x1, y1, x2, y2, a, b) => `
      <path d="M${x1} ${y1}L${x2} ${y2}" stroke="#e02020" stroke-width="4.5" fill="none"/>
      <path d="M${x2} ${y2}L${a}L${b}Z" fill="#e02020"/>`
    this.attachShadow({ mode: 'open' }).innerHTML = `
      <style>:host { position: absolute; left: 0; top: 0; width: 1400px; height: 654px; pointer-events: none; z-index: 9; } svg { display: block; }</style>
      <svg width="1400" height="654" viewBox="0 0 1400 654">
        <rect x="127" y="64" width="391" height="517" fill="none" stroke="#e02020" stroke-width="4.5"/>
        ${arrow(606, 175, 549, 50, '548 72', '568 63')}
        ${arrow(997, 226, 1018, 290, '1000 270', '1022 265')}
        ${arrow(1286, 228, 1240, 292, '1241 268', '1261 284')}
      </svg>`
  }
}

customElements.define('lu-icon', LuIcon)
customElements.define('color-emoji', ColorEmoji)
customElements.define('pattern-row', PatternRow)
customElements.define('sheet-head', SheetHead)
customElements.define('seg-switch', SegSwitch)
customElements.define('top-button', TopButton)
customElements.define('preview-pane', PreviewPane)
customElements.define('app-header', AppHeader)
customElements.define('rail-item', RailItem)
customElements.define('side-rail', SideRail)
customElements.define('product-panel', ProductPanel)
customElements.define('app-window', AppWindow)
customElements.define('annotation-layer', AnnotationLayer)
</script>
</body>
</html>
